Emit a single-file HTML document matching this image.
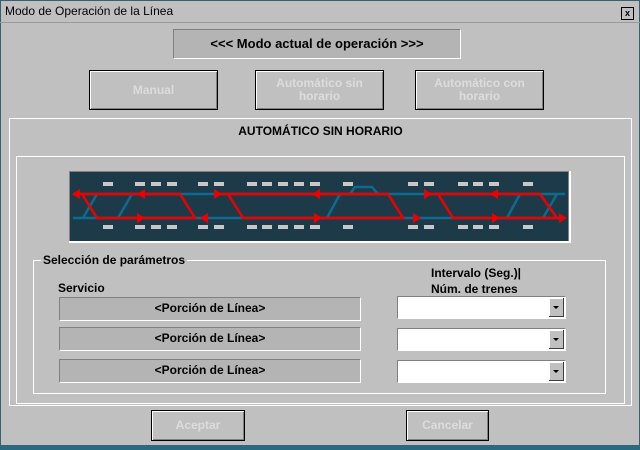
<!DOCTYPE html>
<html><head><meta charset="utf-8"><style>
*{margin:0;padding:0;box-sizing:border-box}
body{width:640px;height:450px;background:#c0c0c0;position:relative;overflow:hidden;font-family:"Liberation Sans",Arial,sans-serif;font-size:12px}
.a{position:absolute}
.b{font-weight:bold}
.btn{position:absolute;border:1px solid #000;box-shadow:inset 1px 1px 0 #fff,inset -1px -1px 0 #808080;background:#c0c0c0;color:#dcdcdc;font-weight:bold;text-align:center;display:flex;align-items:center;justify-content:center;line-height:13px}
.grp{position:absolute;border:1px solid #fff}
.fld{position:absolute;background:#b4b4b4;border-top:1px solid #808080;border-left:1px solid #808080;border-right:1px solid #fff;border-bottom:1px solid #fff;font-weight:bold;text-align:center;line-height:21px}
.cmb{position:absolute;background:#fff;border-top:1px solid #808080;border-left:1px solid #808080;border-right:1px solid #fff;border-bottom:1px solid #fff}
.cmb i{position:absolute;right:1px;top:1px;width:15px;height:19px;background:#c0c0c0;border-right:1px solid #404040;border-bottom:1px solid #404040;box-shadow:inset 1px 1px 0 #fff}
.cmb i:after{content:"";position:absolute;left:4px;top:8px;border-left:3px solid transparent;border-right:3px solid transparent;border-top:3px solid #000}
</style></head><body>
<div class="a" style="left:0;top:0;width:640px;height:450px;border:1px solid #3a6070;border-bottom:5px solid #2a6a80"></div>
<div class="a" style="left:5px;top:4px;font-size:12px">Modo de Operación de la Línea</div>
<div class="a" style="left:621px;top:7px;width:13px;height:13px;border:1px solid #000;background:#c0c0c0;font-size:9px;line-height:11px;text-align:center;font-weight:bold">x</div>
<div class="a" style="left:0;top:22px;width:640px;height:1px;background:#9a9a9a"></div>
<div class="fld" style="left:173px;top:29px;width:288px;height:30px;line-height:28px;font-size:13px;color:#000">&lt;&lt;&lt; Modo actual de operación &gt;&gt;&gt;</div>
<div class="btn" style="left:89px;top:70px;width:129px;height:40px">Manual</div>
<div class="btn" style="left:255px;top:70px;width:129px;height:40px">Automático sin<br>horario</div>
<div class="btn" style="left:415px;top:70px;width:129px;height:40px">Automático con<br>horario</div>
<div class="grp" style="left:9px;top:118px;width:623px;height:288px"></div>
<div class="a b" style="left:9px;top:124px;width:623px;text-align:center">AUTOMÁTICO SIN HORARIO</div>
<div class="grp" style="left:16px;top:156px;width:609px;height:248px"></div>
<svg class="a" style="left:69px;top:171px" width="502" height="72" viewBox="69 171 502 72">
<rect x="69" y="171" width="502" height="72" fill="#fff"/>
<rect x="69" y="171" width="500" height="70" fill="#808080"/>
<rect x="70" y="172" width="498" height="69" fill="#1c3a48"/>
<g stroke="#0f6a8e" stroke-width="2.5" fill="none">
<path d="M73 194H565M73 218H565M97 194L83 218M132 194L118 218M340 194L327 218M350 194L355 187H372L378 194M520 194L507 218M557 194L543 218"/>
</g>
<g fill="#c8c8c8">
<rect x="103" y="182" width="10" height="4"/><rect x="135" y="182" width="10" height="4"/><rect x="151" y="182" width="10" height="4"/><rect x="167" y="182" width="10" height="4"/><rect x="198" y="182" width="10" height="4"/><rect x="214" y="182" width="10" height="4"/><rect x="247" y="182" width="10" height="4"/><rect x="262" y="182" width="10" height="4"/><rect x="278" y="182" width="10" height="4"/><rect x="294" y="182" width="10" height="4"/><rect x="310" y="182" width="10" height="4"/><rect x="343" y="182" width="10" height="4"/><rect x="408" y="182" width="10" height="4"/><rect x="424" y="182" width="10" height="4"/><rect x="458" y="182" width="10" height="4"/><rect x="473" y="182" width="10" height="4"/><rect x="489" y="182" width="10" height="4"/><rect x="523" y="182" width="10" height="4"/>
<rect x="103" y="225" width="10" height="4"/><rect x="135" y="225" width="10" height="4"/><rect x="151" y="225" width="10" height="4"/><rect x="167" y="225" width="10" height="4"/><rect x="198" y="225" width="10" height="4"/><rect x="214" y="225" width="10" height="4"/><rect x="247" y="225" width="10" height="4"/><rect x="262" y="225" width="10" height="4"/><rect x="278" y="225" width="10" height="4"/><rect x="294" y="225" width="10" height="4"/><rect x="310" y="225" width="10" height="4"/><rect x="343" y="225" width="10" height="4"/><rect x="408" y="225" width="10" height="4"/><rect x="424" y="225" width="10" height="4"/><rect x="458" y="225" width="10" height="4"/><rect x="473" y="225" width="10" height="4"/><rect x="489" y="225" width="10" height="4"/><rect x="523" y="225" width="10" height="4"/>
</g>
<g stroke="#ee0000" stroke-width="2.5" fill="none">
<path d="M76 194H180L195 218H97L82 194"/>
<path d="M215 194H388L403 218H243L228 194"/>
<path d="M425 194H540L557 218H453L438 194"/>
</g>
<g fill="#ee0000">
<path d="M72 194L80 189V199Z"/><path d="M137 194L145 189V199Z"/>
<path d="M145 218L137 213V223Z"/><path d="M200 218L208 213V223Z"/>
<path d="M222 194L214 189V199Z"/><path d="M312 194L320 189V199Z"/>
<path d="M322 218L314 213V223Z"/><path d="M421 218L413 213V223Z"/>
<path d="M432 194L424 189V199Z"/><path d="M490 194L498 189V199Z"/>
<path d="M500 218L492 213V223Z"/><path d="M567 218L559 213V223Z"/>
</g>
</svg>
<div class="grp" style="left:33px;top:260px;width:573px;height:134px"></div>
<div class="a b" style="left:41px;top:253px;background:#c0c0c0;padding:0 2px">Selección de parámetros</div>
<div class="a b" style="left:58px;top:281px">Servicio</div>
<div class="a b" style="left:431px;top:266px">Intervalo (Seg.)|</div>
<div class="a b" style="left:431px;top:282px">Núm. de trenes</div>
<div class="fld" style="left:59px;top:297px;width:302px;height:24px">&lt;Porción de Línea&gt;</div>
<div class="fld" style="left:59px;top:327px;width:302px;height:24px">&lt;Porción de Línea&gt;</div>
<div class="fld" style="left:59px;top:359px;width:302px;height:24px">&lt;Porción de Línea&gt;</div>
<div class="cmb" style="left:397px;top:296px;width:169px;height:23px"><i></i></div>
<div class="cmb" style="left:397px;top:328px;width:169px;height:23px"><i></i></div>
<div class="cmb" style="left:397px;top:360px;width:169px;height:23px"><i></i></div>
<div class="btn" style="left:151px;top:410px;width:94px;height:31px">Aceptar</div>
<div class="btn" style="left:406px;top:410px;width:83px;height:31px">Cancelar</div>
</body></html>
